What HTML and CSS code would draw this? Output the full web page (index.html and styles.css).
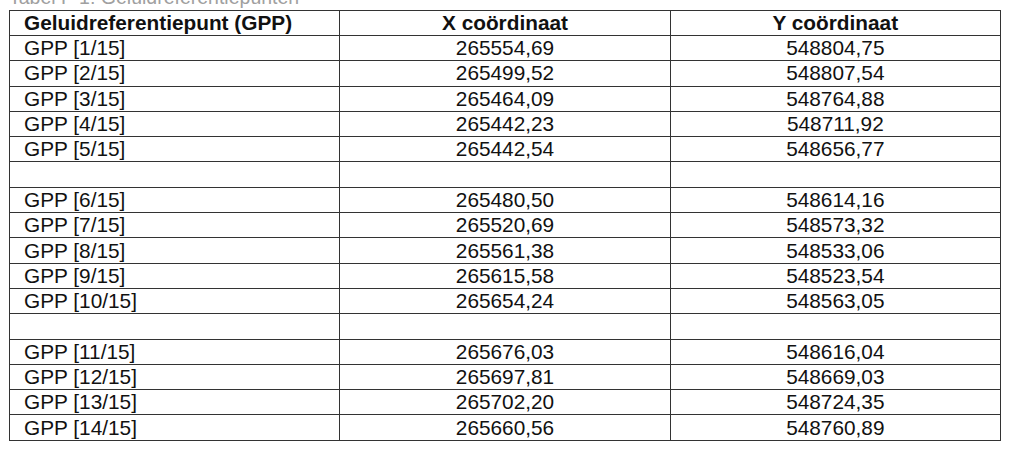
FILE: index.html
```html
<!DOCTYPE html>
<html lang="nl">
<head>
<meta charset="utf-8">
<title>Geluidreferentiepunten</title>
<link rel="stylesheet" href="styles.css">
</head>
<body>
<div class="page">
  <div class="caption">Tabel P 1: Geluidreferentiepunten</div>
  <table class="grid">
    <colgroup><col class="c"><col class="c"><col class="c"></colgroup>
    <thead>
      <tr><th class="first">Geluidreferentiepunt (GPP)</th><th>X coördinaat</th><th>Y coördinaat</th></tr>
    </thead>
    <tbody>
      <tr><td class="first">GPP [1/15]</td><td>265554,69</td><td>548804,75</td></tr>
      <tr><td class="first">GPP [2/15]</td><td>265499,52</td><td>548807,54</td></tr>
      <tr><td class="first">GPP [3/15]</td><td>265464,09</td><td>548764,88</td></tr>
      <tr><td class="first">GPP [4/15]</td><td>265442,23</td><td>548711,92</td></tr>
      <tr><td class="first">GPP [5/15]</td><td>265442,54</td><td>548656,77</td></tr>
      <tr><td class="first">&nbsp;</td><td>&nbsp;</td><td>&nbsp;</td></tr>
      <tr><td class="first">GPP [6/15]</td><td>265480,50</td><td>548614,16</td></tr>
      <tr><td class="first">GPP [7/15]</td><td>265520,69</td><td>548573,32</td></tr>
      <tr><td class="first">GPP [8/15]</td><td>265561,38</td><td>548533,06</td></tr>
      <tr><td class="first">GPP [9/15]</td><td>265615,58</td><td>548523,54</td></tr>
      <tr><td class="first">GPP [10/15]</td><td>265654,24</td><td>548563,05</td></tr>
      <tr><td class="first">&nbsp;</td><td>&nbsp;</td><td>&nbsp;</td></tr>
      <tr><td class="first">GPP [11/15]</td><td>265676,03</td><td>548616,04</td></tr>
      <tr><td class="first">GPP [12/15]</td><td>265697,81</td><td>548669,03</td></tr>
      <tr><td class="first">GPP [13/15]</td><td>265702,20</td><td>548724,35</td></tr>
      <tr><td class="first">GPP [14/15]</td><td>265660,56</td><td>548760,89</td></tr>
    </tbody>
  </table>
</div>
</body>
</html>
```

FILE: styles.css
```css
html, body {
  margin: 0;
  padding: 0;
  background: #ffffff;
}

body {
  font-family: "Liberation Sans", Arial, sans-serif;
  color: #111111;
  overflow: hidden;
}

.page {
  padding: 0 15px 0 9px;
}

.caption {
  font-size: 19.5px;
  line-height: 22px;
  height: 22px;
  margin: -14px 0 2px 0;
  color: #a0a0a0;
  white-space: nowrap;
}

.grid {
  width: 992px;
  border-collapse: collapse;
  table-layout: fixed;
  font-size: 20.8px;
}

.grid .c {
  width: 33.333%;
}

.grid th,
.grid td {
  border: 1px solid #333333;
  padding: 0 8px;
  height: 24.3px;
  line-height: 22px;
  text-align: center;
  vertical-align: middle;
  white-space: nowrap;
  overflow: hidden;
}

.grid th {
  font-weight: bold;
  height: 24px;
}

.grid .first {
  text-align: left;
  padding-left: 14px;
}
```
